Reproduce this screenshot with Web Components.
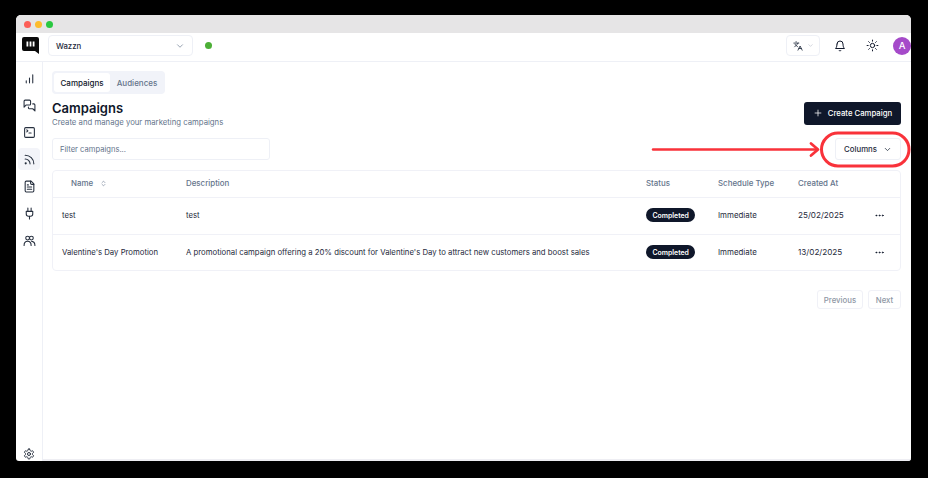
<!DOCTYPE html>
<html>
<head>
<meta charset="utf-8">
<title>Campaigns</title>
<style>
    html,body{margin:0;background:#000;}
    body{width:928px;height:478px;overflow:hidden;position:relative;font-family:Inter,"Liberation Sans",sans-serif;color:#0f172a;}
</style>
</head>
<body>
<app-window>
    <app-header slot="header"></app-header>
    <app-sidebar slot="sidebar"></app-sidebar>
    <campaigns-page></campaigns-page>
</app-window>
<red-callout></red-callout>

<script>
const ICONS = {
    chart: '<path d="M12 20V11M18 20V5M6 20v-4"/>',
    messages: '<path d="M14 9a2 2 0 0 1-2 2H6l-4 4V4a2 2 0 0 1 2-2h8a2 2 0 0 1 2 2z"/><path d="M18 9h2a2 2 0 0 1 2 2v11l-4-4h-6a2 2 0 0 1-2-2v-1"/>',
    terminal: '<path d="m7 11 2-2-2-2"/><path d="M11 13h4"/><rect x="3" y="3" width="18" height="18" rx="2"/>',
    rss: '<path d="M4 11a9 9 0 0 1 9 9"/><path d="M4 4a16 16 0 0 1 16 16"/><circle cx="5" cy="19" r="1"/>',
    file: '<path d="M15 2H6a2 2 0 0 0-2 2v16a2 2 0 0 0 2 2h12a2 2 0 0 0 2-2V7Z"/><path d="M14 2v4a2 2 0 0 0 2 2h4"/><path d="M10 9H8M16 13H8M16 17H8"/>',
    plug: '<path d="M12 22v-5M9 8V2M15 8V2"/><path d="M18 8v5a4 4 0 0 1-4 4h-4a4 4 0 0 1-4-4V8Z"/>',
    users: '<circle cx="8.500" cy="7.500" r="3.500"/><circle cx="15.500" cy="7.500" r="3.500"/><path d="M2 21c0-4.500 2.500-7.500 6.500-7.500s6.500 3 6.500 7.500"/><path d="M16 13.600c3.500.3 6 3.200 6 7.400"/>',
    settings: '<path d="M12.220 2h-.44a2 2 0 0 0-2 2v.18a2 2 0 0 1-1 1.730l-.43.25a2 2 0 0 1-2 0l-.15-.08a2 2 0 0 0-2.730.73l-.22.38a2 2 0 0 0 .73 2.730l.15.1a2 2 0 0 1 1 1.720v.51a2 2 0 0 1-1 1.740l-.15.09a2 2 0 0 0-.73 2.730l.22.38a2 2 0 0 0 2.730.73l.15-.08a2 2 0 0 1 2 0l.43.25a2 2 0 0 1 1 1.730V20a2 2 0 0 0 2 2h.44a2 2 0 0 0 2-2v-.18a2 2 0 0 1 1-1.730l.43-.25a2 2 0 0 1 2 0l.15.08a2 2 0 0 0 2.730-.73l.22-.39a2 2 0 0 0-.73-2.730l-.15-.08a2 2 0 0 1-1-1.740v-.5a2 2 0 0 1 1-1.740l.15-.09a2 2 0 0 0 .73-2.730l-.22-.38a2 2 0 0 0-2.730-.73l-.15.08a2 2 0 0 1-2 0l-.43-.25a2 2 0 0 1-1-1.730V4a2 2 0 0 0-2-2z"/><circle cx="12" cy="12" r="3"/>',
    languages: '<path d="m5 8 6 6"/><path d="m4 14 6-6 2-3"/><path d="M2 5h12"/><path d="M7 2h1"/><path d="m22 22-5-10-5 10"/><path d="M14 18h6"/>',
    bell: '<path d="M6 8a6 6 0 0 1 12 0c0 7 3 9 3 9H3s3-2 3-9"/><path d="M10.300 21a1.940 1.940 0 0 0 3.400 0"/>',
    sun: '<circle cx="12" cy="12" r="4"/><path d="M12 2v2M12 20v2M4.930 4.930l1.410 1.410M17.660 17.660l1.410 1.410M2 12h2M20 12h2M6.340 17.660l-1.410 1.410M19.070 4.930l-1.410 1.410"/>',
    chevron: '<path d="m6 9 6 6 6-6"/>',
    sort: '<path d="m7 15 5 5 5-5"/><path d="m7 9 5-5 5 5"/>',
    plus: '<path d="M5 12h14M12 5v14"/>',
    dots: '<circle cx="12" cy="12" r="1"/><circle cx="19" cy="12" r="1"/><circle cx="5" cy="12" r="1"/>'
}

class UiIcon extends HTMLElement{
    connectedCallback(){
        const size = this.getAttribute('size') || 12
        const stroke = this.getAttribute('stroke') || 2
        this.attachShadow({mode: "open"})
        this.shadowRoot.innerHTML = `
            <style>
                :host{display:inline-flex;flex:none;width:${size}px;height:${size}px;}
                svg{display:block;width:100%;height:100%;fill:none;stroke:currentColor;stroke-width:${stroke};stroke-linecap:round;stroke-linejoin:round;}
            </style>
            <svg viewBox="0 0 24 24">${ICONS[this.getAttribute('name')]}</svg>
        `
    }
}
customElements.define('ui-icon', UiIcon)

class AppWindow extends HTMLElement{
    constructor(){
        super()
        this.attachShadow({mode: "open"})
        this.shadowRoot.innerHTML = `
            <style>
                :host{display:flex;flex-direction:column;width:895px;height:446px;margin:15px 0 0 16px;background:#fff;border-radius:5px 5px 3px 3px;overflow:hidden;}
                .titlebar{display:flex;align-items:center;gap:4px;height:18px;flex:none;padding-left:8px;background:#e6e5e6;}
                .titlebar i{width:7px;height:7px;border-radius:50%;}
                .body{flex:1;display:flex;min-height:0;}
            </style>
            <div class="titlebar">
                <i style="background:#fc5f57"></i><i style="background:#fdbc2e"></i><i style="background:#29c840"></i>
            </div>
            <slot name="header"></slot>
            <div class="body">
                <slot name="sidebar"></slot>
                <slot></slot>
            </div>
        `
    }
}
customElements.define('app-window', AppWindow)

class AppHeader extends HTMLElement{
    constructor(){
        super()
        this.attachShadow({mode: "open"})
        this.shadowRoot.innerHTML = `
            <style>
                :host{display:flex;align-items:center;height:29px;flex:none;border-bottom:1px solid #eef0f6;box-sizing:border-box;padding:0 0 3px 6px;}
                .logo{width:17px;height:17px;flex:none;margin-right:9px;}
                .select{display:flex;align-items:center;justify-content:space-between;width:145px;height:21px;box-sizing:border-box;padding:0 7px 0 7px;border:1px solid #eef0f6;border-radius:4px;font-size:7.800px;font-weight:500;color:#1e293b;}
                .select ui-icon{color:#64748b;}
                .dot{width:7px;height:7px;border-radius:50%;background:#4caf36;margin-left:12px;}
                .right{margin-left:auto;display:flex;align-items:center;}
                .lang{display:flex;align-items:center;justify-content:center;gap:4px;width:34px;height:21px;box-sizing:border-box;border:1px solid #eef0f6;border-radius:4px;color:#1e293b;margin-right:14px;}
                .lang ui-icon + ui-icon{color:#b6bcc8;}
                .bell{margin-right:20px;color:#0f172a;}
                .sun{margin-right:14px;color:#0f172a;}
                .avatar{width:18px;height:18px;border-radius:50%;background:#a54ac9;color:#fff;font-size:9.500px;font-weight:500;display:flex;align-items:center;justify-content:center;}
            </style>
            <svg class="logo" viewBox="0 0 17 17">
                <path fill="#0a0a0a" d="M2 0h13a2 2 0 0 1 2 2v15l-4-3H2a2 2 0 0 1-2-2V2a2 2 0 0 1 2-2z"/>
                <path fill="#fff" d="M4.500 4.500h1.800v5h-1.800zM7.600 4.500h1.800v5h-1.800zM10.700 4.500h1.800v5h-1.800z"/>
            </svg>
            <div class="select"><span>Wazzn</span><ui-icon name="chevron" size="10" stroke="1.600"></ui-icon></div>
            <span class="dot"></span>
            <div class="right">
                <div class="lang"><ui-icon name="languages" size="10"></ui-icon><ui-icon name="chevron" size="7"></ui-icon></div>
                <ui-icon class="bell" name="bell" size="12" stroke="2"></ui-icon>
                <ui-icon class="sun" name="sun" size="13" stroke="1.800"></ui-icon>
                <span class="avatar">A</span>
            </div>
        `
    }
}
customElements.define('app-header', AppHeader)

class AppSidebar extends HTMLElement{
    constructor(){
        super()
        this.attachShadow({mode: "open"})
        const names = ['chart','messages','terminal','rss','file','plug','users']
        this.shadowRoot.innerHTML = `
            <style>
                :host{display:flex;flex-direction:column;align-items:center;width:27px;box-sizing:border-box;height:100%;border-right:1px solid #eef0f6;padding:5px 0 0;color:#27303f;}
                .item{width:22px;height:22px;margin-bottom:5px;border-radius:4px;display:flex;align-items:center;justify-content:center;}
                .item.active{background:#f3f4f9;}
                .item:last-child{margin:auto 0 0;height:14px;}
            </style>
            ${names.map(n => `<div class="item ${n == 'rss' ? 'active' : ''}"><ui-icon name="${n}" size="13"></ui-icon></div>`).join('')}
            <div class="item"><ui-icon name="settings" size="12"></ui-icon></div>
        `
    }
}
customElements.define('app-sidebar', AppSidebar)

class SegTabs extends HTMLElement{
    constructor(){
        super()
        this.attachShadow({mode: "open"})
        this.shadowRoot.innerHTML = `
            <style>
                :host{display:inline-flex;flex:none;align-self:flex-start;width:113px;height:23px;box-sizing:border-box;padding:2px;background:#f1f3f9;border-radius:4px;font-size:8px;font-weight:500;color:#64748b;}
                span{display:flex;align-items:center;padding:0 6.500px;border-radius:3px;}
                .on{background:#fff;color:#0f172a;}
            </style>
            <span class="on">Campaigns</span><span>Audiences</span>
        `
    }
}
customElements.define('seg-tabs', SegTabs)

class CampaignRow extends HTMLElement{
    constructor(){
        super()
        this.attachShadow({mode: "open"})
        this.shadowRoot.innerHTML = `
            <style>
                :host{display:grid;grid-template-columns:124px 460px 72px 80px 76px 1fr;align-items:center;height:37px;box-sizing:border-box;padding:0 0 2px 9px;border-top:1px solid #f0f1f7;font-size:7.750px;color:#1e293b;}
                :host(:last-child){height:36px;padding-bottom:1px;}
                .badge{display:inline-flex;align-items:center;height:14px;padding:0 6.500px;border-radius:7px;background:#0f172a;color:#fff;font-size:6.900px;font-weight:600;}
                .date{font-size:8.150px;}
                .type{font-size:7.900px;}
                ui-icon{color:#0f172a;}
            </style>
            <span><slot name="name"></slot></span>
            <span><slot name="desc"></slot></span>
            <span><span class="badge">Completed</span></span>
            <span class="type">Immediate</span>
            <span class="date"><slot name="date"></slot></span>
            <ui-icon name="dots" size="11"></ui-icon>
        `
    }
}
customElements.define('campaign-row', CampaignRow)

class CampaignsTable extends HTMLElement{
    constructor(){
        super()
        this.attachShadow({mode: "open"})
        this.shadowRoot.innerHTML = `
            <style>
                :host{display:block;box-sizing:border-box;border:1px solid #f0f1f7;border-radius:4px;}
                .head{display:grid;grid-template-columns:124px 460px 72px 80px 76px 1fr;align-items:center;height:26px;box-sizing:border-box;padding:0 0 2px 9px;font-size:7.900px;font-weight:500;color:#64748b;}
                .name{display:flex;align-items:center;gap:7px;padding-left:9px;}
            </style>
            <div class="head">
                <span class="name">Name <ui-icon name="sort" size="7"></ui-icon></span>
                <span>Description</span>
                <span>Status</span>
                <span>Schedule Type</span>
                <span>Created At</span>
            </div>
            <slot></slot>
        `
    }
}
customElements.define('campaigns-table', CampaignsTable)

class CampaignsPage extends HTMLElement{
    constructor(){
        super()
        this.attachShadow({mode: "open"})
        this.shadowRoot.innerHTML = `
            <style>
                :host{flex:1;min-width:0;display:flex;flex-direction:column;box-sizing:border-box;padding:9px 10px 0 9px;border-bottom:2px solid #eeeef3;}
                .top{display:flex;justify-content:space-between;align-items:flex-start;margin-top:6px;}
                h1{margin:0;font-size:13px;line-height:16px;font-weight:600;color:#0f172a;}
                p{margin:0;font-size:7.750px;line-height:12px;color:#64748b;}
                .create{display:flex;align-items:center;justify-content:center;gap:5px;width:97px;height:23px;box-sizing:border-box;padding-bottom:1px;border-radius:3px;background:#0f172a;color:#fff;font-size:7.750px;font-weight:500;margin-top:2px;}
                .tools{display:flex;justify-content:space-between;margin-top:10px;margin-bottom:10px;}
                .filter{display:flex;align-items:center;width:218px;height:22px;box-sizing:border-box;padding:0 7px;border:1px solid #eef0f6;border-radius:3px;font-size:7.600px;color:#64748b;}
                .columns{display:flex;align-items:center;justify-content:center;gap:6px;width:66px;height:22px;box-sizing:border-box;border:1px solid #eef0f6;border-radius:3px;font-size:7.800px;font-weight:500;color:#1e293b;}
                .pager{display:flex;justify-content:flex-end;gap:5px;margin-top:19px;}
                .pager span{display:flex;align-items:center;justify-content:center;height:19px;box-sizing:border-box;border:1px solid #f0f1f7;border-radius:3px;font-size:7.800px;font-weight:500;color:#8e96a4;}
            </style>
            <seg-tabs></seg-tabs>
            <div class="top">
                <div><h1>Campaigns</h1><p>Create and manage your marketing campaigns</p></div>
                <div class="create"><ui-icon name="plus" size="10" stroke="1.800"></ui-icon>Create Campaign</div>
            </div>
            <div class="tools">
                <div class="filter">Filter campaigns...</div>
                <div class="columns">Columns <ui-icon name="chevron" size="9"></ui-icon></div>
            </div>
            <campaigns-table>
                <campaign-row>
                    <span slot="name">test</span>
                    <span slot="desc">test</span>
                    <span slot="date">25/02/2025</span>
                </campaign-row>
                <campaign-row>
                    <span slot="name">Valentine's Day Promotion</span>
                    <span slot="desc">A promotional campaign offering a 20% discount for Valentine's Day to attract new customers and boost sales</span>
                    <span slot="date">13/02/2025</span>
                </campaign-row>
            </campaigns-table>
            <div class="pager"><span style="width:46px">Previous</span><span style="width:33px">Next</span></div>
        `
    }
}
customElements.define('campaigns-page', CampaignsPage)

//red annotation drawn on top of the screenshot
class RedCallout extends HTMLElement{
    constructor(){
        super()
        this.attachShadow({mode: "open"})
        this.shadowRoot.innerHTML = `
            <style>
                :host{position:absolute;left:0;top:0;width:928px;height:478px;pointer-events:none;}
                svg{display:block;fill:none;stroke:#f9323a;stroke-linecap:round;stroke-linejoin:round;}
            </style>
            <svg width="928" height="478" viewBox="0 0 928 478">
                <path stroke-width="2.400" d="M653 149.500H817"/>
                <path stroke-width="2.800" d="M811 143.500l7 6-7 6"/>
                <rect x="821.500" y="133" width="87.500" height="33" rx="16.500" stroke-width="3"/>
            </svg>
        `
    }
}
customElements.define('red-callout', RedCallout)
</script>
</body>
</html>
